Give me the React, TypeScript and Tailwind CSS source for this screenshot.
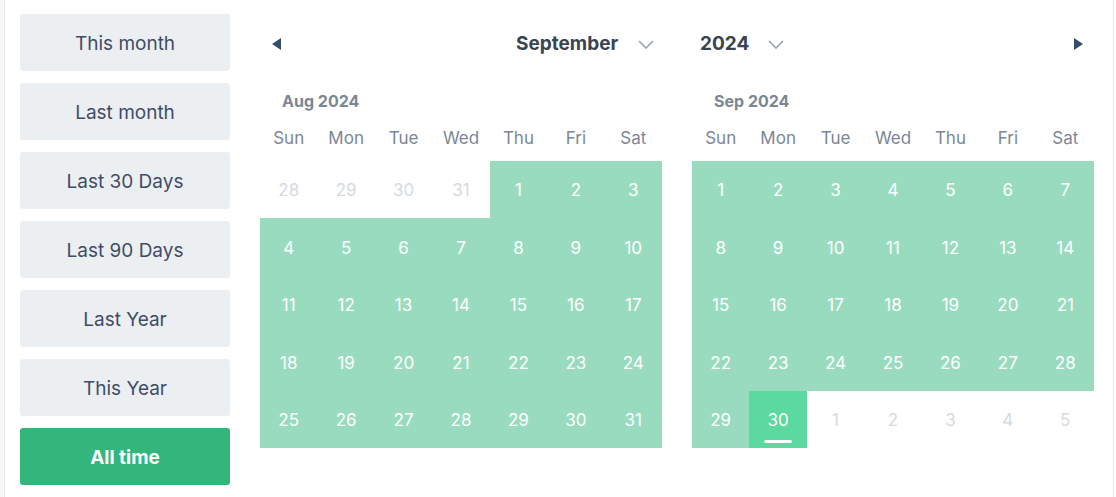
const presets = ['This month', 'Last month', 'Last 30 Days', 'Last 90 Days', 'Last Year', 'This Year'];
const weekdays = ['Sun', 'Mon', 'Tue', 'Wed', 'Thu', 'Fri', 'Sat'];

type Day = { n: number; outside?: boolean; selected?: boolean };

const augDays: Day[] = [
  ...[28, 29, 30, 31].map((n) => ({ n, outside: true })),
  ...Array.from({ length: 31 }, (_, i) => ({ n: i + 1 })),
];

const sepDays: Day[] = [
  ...Array.from({ length: 30 }, (_, i) => ({ n: i + 1, selected: i === 29 })),
  ...[1, 2, 3, 4, 5].map((n) => ({ n, outside: true })),
];

function Triangle({ dir }: { dir: 'left' | 'right' }) {
  return (
    <svg width="9" height="12" viewBox="0 0 9 12" className="text-[#334e68]">
      {dir === 'left' ? <path d="M9 0 L0 6 L9 12 Z" fill="currentColor" /> : <path d="M0 0 L9 6 L0 12 Z" fill="currentColor" />}
    </svg>
  );
}

function Chevron() {
  return (
    <svg width="16" height="9" viewBox="0 0 16 9" fill="none" className="text-[#9aa5b1]">
      <path d="M1 1 L8 8 L15 1" stroke="currentColor" strokeWidth="1.7" />
    </svg>
  );
}

function Month({ title, days }: { title: string; days: Day[] }) {
  return (
    <div className="w-[402px]">
      <div className="mt-[14px] h-[28px] flex items-center pl-[22px] pt-[2px] text-[16px] font-bold text-[#7b8794]">{title}</div>
      <div className="grid grid-cols-7 h-[47px] items-center pt-[2px]">
        {weekdays.map((d) => (
          <div key={d} className="text-center text-[17px] text-[#7b8794]">
            {d}
          </div>
        ))}
      </div>
      <div className="grid grid-cols-7 auto-rows-[57.4px]">
        {days.map((d, i) => (
          <div
            key={i}
            className={
              'relative flex items-center justify-center pt-[3px] text-[17px] ' +
              (d.outside ? 'text-[#d5dae0]' : d.selected ? 'bg-[#5cd99f] text-white' : 'bg-[#99dbbf] text-white')
            }
          >
            {d.n}
            {d.selected && <span className="absolute bottom-[5px] left-1/2 -translate-x-1/2 w-[27px] h-[3px] bg-white" />}
          </div>
        ))}
      </div>
    </div>
  );
}

export default function App() {
  return (
    <div className="w-[1116px] h-[497px] bg-white flex" style={{ fontFamily: 'Inter, "Noto Sans", sans-serif' }}>
      <div className="w-[4px] bg-[#f6f7f9]" />
      <div className="w-[1110px] h-full border-l border-r border-[#e4e7eb] flex pl-[15px] pt-[14px]">
        {/* Presets */}
        <div className="w-[210px] flex flex-col gap-[12px]">
          {presets.map((p) => (
            <button key={p} className="h-[57px] pt-[3px] rounded-[3px] bg-[#eceff1] text-[19px] text-[#3e4c66]">
              {p}
            </button>
          ))}
          <button className="h-[57px] pt-[3px] rounded-[3px] bg-[#33b57b] text-[19px] font-bold text-white">All time</button>
        </div>

        {/* Calendar */}
        <div className="ml-[30px] w-[834px]">
          <div className="h-[58px] pt-[2px] flex items-center justify-between">
            <button className="w-[32px] h-[32px] flex items-center justify-center">
              <Triangle dir="left" />
            </button>
            <div className="flex items-center pr-[48px]">
              <div className="flex items-center w-[184px]">
                <span className="text-[19px] font-bold text-[#3a4350]">September</span>
                <span className="ml-[20px]">
                  <Chevron />
                </span>
              </div>
              <div className="flex items-center w-[90px]">
                <span className="text-[19px] font-bold text-[#3a4350]">2024</span>
                <span className="ml-[19px]">
                  <Chevron />
                </span>
              </div>
            </div>
            <button className="w-[32px] h-[32px] flex items-center justify-center">
              <Triangle dir="right" />
            </button>
          </div>
          <div className="flex gap-[30px]">
            <Month title="Aug 2024" days={augDays} />
            <Month title="Sep 2024" days={sepDays} />
          </div>
        </div>
      </div>
    </div>
  );
}
